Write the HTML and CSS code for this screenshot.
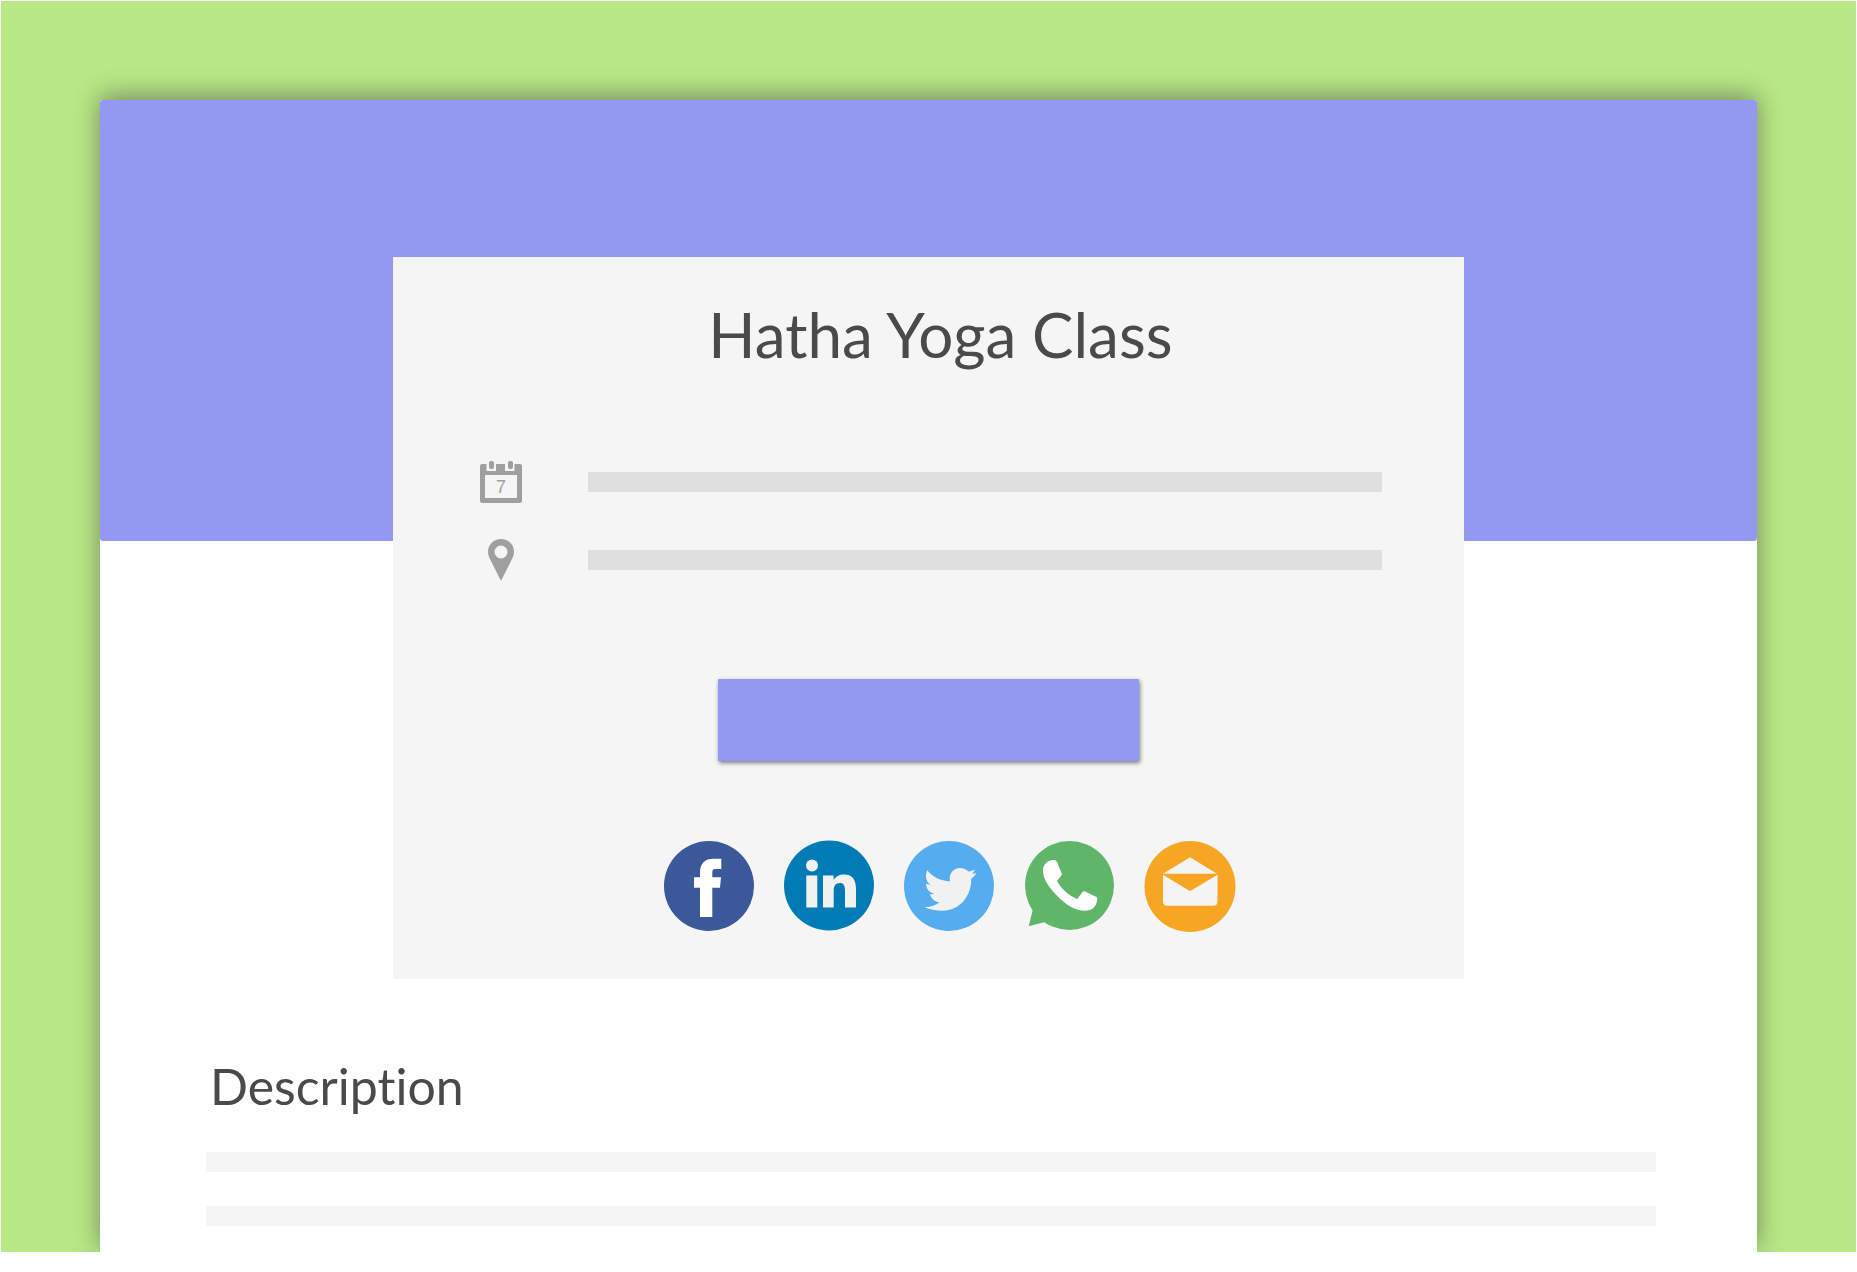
FILE: index.html
```html
<!DOCTYPE html>
<html lang="en">
<head>
  <meta charset="UTF-8" />
  <meta name="viewport" content="width=device-width, initial-scale=1.0" />
  <title>Hatha Yoga Class</title>
  <link rel="stylesheet" href="styles.css">
</head>
<body>
  <div class="backdrop">
    <main class="page">
      <div class="banner"></div>

      <section class="event-card">
        <h1>Hatha Yoga Class</h1>
        <ul class="details">
          <li>
            <svg class="detail-icon" viewBox="0 0 42 42" aria-hidden="true">
              <path fill-rule="evenodd" d="M2 3H6.500V10H16V3H25V10H34.500V3H40Q42 3 42 5V40Q42 42 40 42H2Q0 42 0 40V5Q0 3 2 3ZM5 14V37H37V14Z" />
              <rect x="9" y="0" width="5" height="8" rx="2" />
              <rect x="28" y="0" width="5" height="8" rx="2" />
              <text x="21" y="32" text-anchor="middle">7</text>
            </svg>
            <span class="line"></span>
          </li>
          <li>
            <svg class="detail-icon" viewBox="0 0 42 42" aria-hidden="true">
              <path fill-rule="evenodd" d="M21 0C28 0 34 5.500 34 12.500C34 15.500 33 18 32 20L21 42L10 20C9 18 8 15.500 8 12.500C8 5.500 14 0 21 0ZM21 6.500A6.500 6.500 0 1 0 21 19.500A6.500 6.500 0 1 0 21 6.500Z" />
            </svg>
            <span class="line"></span>
          </li>
        </ul>

        <button class="book-btn" type="button" aria-label="Book"></button>

        <nav class="social">
          <a href="#" aria-label="Facebook">
            <svg viewBox="0 0 90 90">
              <circle cx="45" cy="45" r="45" fill="#3b5998" />
              <path fill="#fff" d="M36 76V46.700H30V36.300H36V32C36 22 41 17.700 49.500 17.700H57.300V28H51.500C49.200 28 48.300 29 48.300 31V36.300H57L56 46.700H48.300V76Z" />
            </svg>
          </a>
          <a href="#" aria-label="LinkedIn">
            <svg viewBox="0 0 90 90">
              <circle cx="45" cy="44.500" r="45" fill="#007bb6" />
              <circle cx="28" cy="24.500" r="6" fill="#f1f1f1" />
              <path fill="#f1f1f1" d="M22.300 34.500H33.300V66.500H22.300ZM39 34.500H49.600V39C51.500 35.500 55.500 33.500 60 33.500C69 33.500 72 39.500 72 48V66.500H61V49.500C61 44.500 59.500 42 56 42C51.500 42 49.700 45 49.700 49.500V66.500H39Z" />
            </svg>
          </a>
          <a href="#" aria-label="Twitter">
            <svg viewBox="0 0 90 90">
              <circle cx="45" cy="45" r="45" fill="#55acee" />
              <path fill="#f1f1f1" d="M23.300 29.300C28.500 36 36.500 40 46 40.300C44.500 32.500 49.500 27 56 27C59.500 27 62.300 28.300 64.400 30.600C66.800 30.300 69 29.500 71 28.500C70.300 30.300 69.300 31.500 67.800 32.800C69.400 32.800 70.700 32.500 72.200 32C71 34.300 69.300 36.200 67.300 37.600C67.500 55 56 69.800 38.500 69.800C31.500 69.800 25.500 68.500 20.300 66C26 66.300 31.500 64.800 35.500 61.300C31 61 27.300 57.800 26 53.200C27.400 53.400 28.600 53.300 30 52.800C25 51.500 22 47.500 22 42.600C23.400 43.400 24.800 43.700 26.400 43.700C21.800 40.300 20.800 34.300 23.300 29.300Z" />
            </svg>
          </a>
          <a href="#" aria-label="WhatsApp">
            <svg viewBox="0 0 90 90">
              <circle cx="45.500" cy="44.500" r="44.500" fill="#5fb568" />
              <path fill="#5fb568" d="M9 68L4.700 85.300L21 81Z" />
              <path fill="#fff" d="M28.300 19C30.800 18.700 32.200 19.300 33 21L38 33.300C36.700 36 35 37.500 33 39.700C37 47.500 44.500 54.500 53.300 58L58 51.500C58.700 50.300 59.700 50 61 50.400L72 55.800C73.200 56.400 73.600 57.200 73.300 58.500C72.500 66 67.500 69.900 61 69.800C51.500 69.500 42.500 64.500 34 55.800C25.500 47 19 38.500 19 30C19 24 22.500 19.700 28.300 19Z" />
            </svg>
          </a>
          <a href="#" aria-label="Email">
            <svg viewBox="0 0 90 90">
              <circle cx="46" cy="45.500" r="45.500" fill="#f6a623" />
              <path fill="#f4f4f4" d="M46 16.300L73 32.700H19ZM19 33.700L44.500 49.200Q46 50.200 47.500 49.200L73.500 33.700V60.200Q73.500 64.700 69 64.700H23.500Q19 64.700 19 60.200Z" />
            </svg>
          </a>
        </nav>
      </section>

      <section class="description">
        <h2>Description</h2>
        <div class="line"></div>
        <div class="line"></div>
      </section>
    </main>
  </div>
</body>
</html>
```
FILE: styles.css
```css
* { box-sizing: border-box; }
:root {
  --accent: #9399f1;
  --green: #b8e986;
  --panel: #f5f5f5;
  --text: #4a4a4a;
}
body {
  margin: 0;
  padding: 1px 1px 20px;
  font-family: Lato, sans-serif;
  background: #fff;
  color: var(--text);
}
.backdrop {
  background: var(--green);
  padding: 99px 99px 0;
  overflow: hidden;
}
.page {
  background: #fff;
  border-radius: 3px 3px 0 0;
  box-shadow: 0 -4px 26px rgba(70, 70, 70, 0.6);
}
.banner {
  height: 441px;
  background: var(--accent);
  border-radius: 3px;
}
.event-card {
  max-width: 1071px;
  margin: -284px auto 0;
  padding: 41px 82px 48px;
  background: var(--panel);
  display: flex;
  flex-direction: column;
  align-items: center;
}
h1, h2 {
  margin: 0;
  font-weight: 400;
  font-variant-ligatures: none;
}
h1 {
  padding-left: 24px;
  font-size: 62px;
  line-height: 72px;
}
.details {
  width: 100%;
  margin: 91px 0 98px;
  padding: 0 0 0 5px;
  list-style: none;
  display: flex;
  flex-direction: column;
  gap: 36px;
}
.details li {
  display: flex;
  align-items: center;
  gap: 66px;
}
.detail-icon {
  width: 42px;
  height: 42px;
  fill: #9f9f9f;
}
.detail-icon text {
  font-family: "Liberation Sans", sans-serif;
  font-size: 18px;
}
.line {
  height: 20px;
  background: var(--panel);
}
.details .line {
  flex: 1;
  background: #dfdfdf;
}
.book-btn {
  width: 421px;
  max-width: 100%;
  height: 82px;
  border: none;
  border-radius: 1px;
  background: var(--accent);
  box-shadow: 1px 2px 4px rgba(0, 0, 0, 0.5);
  cursor: pointer;
}
.social {
  display: flex;
  gap: 30px;
  margin-top: 80px;
  padding-left: 41px;
}
.social a { display: block; }
.social svg {
  display: block;
  width: 90px;
  height: 90px;
  overflow: visible;
}
.description {
  padding: 76px 101px 26px 106px;
  display: flex;
  flex-direction: column;
  gap: 34px;
}
.description h2 {
  padding-left: 4px;
  font-size: 50px;
  line-height: 63px;
}
```
